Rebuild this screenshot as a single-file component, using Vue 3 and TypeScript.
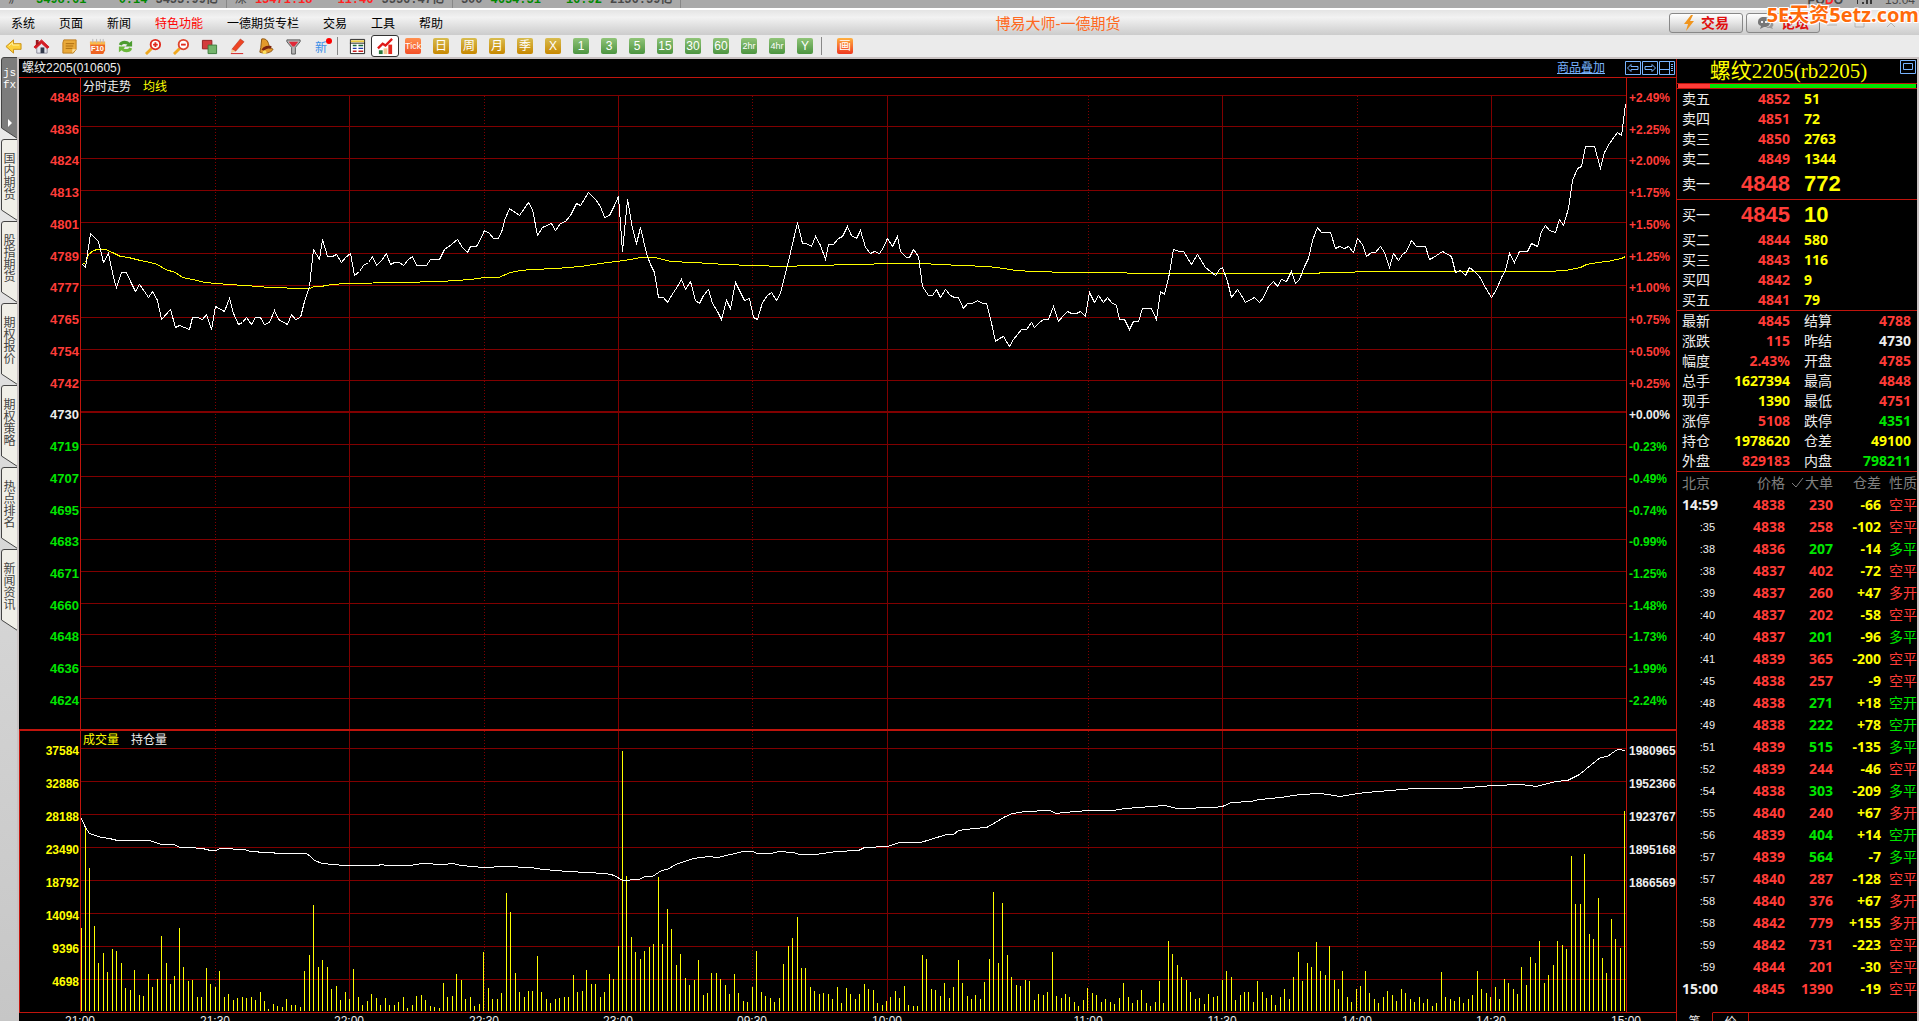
<script setup lang="ts">
import { computed } from 'vue'

type Tone = 'red' | 'green' | 'yellow' | 'white'

const menus = [
  { text: '系统' },
  { text: '页面' },
  { text: '新闻' },
  { text: '特色功能', hot: true },
  { text: '一德期货专栏' },
  { text: '交易' },
  { text: '工具' },
  { text: '帮助' },
]

const periods = [
  { text: 'Tick', kind: 'tick', small: true },
  { text: '日', kind: 'gold' },
  { text: '周', kind: 'gold' },
  { text: '月', kind: 'gold' },
  { text: '季', kind: 'gold' },
  { text: 'X', kind: 'gold' },
  { text: '1', kind: 'leaf' },
  { text: '3', kind: 'leaf' },
  { text: '5', kind: 'leaf' },
  { text: '15', kind: 'leaf' },
  { text: '30', kind: 'leaf' },
  { text: '60', kind: 'leaf' },
  { text: '2hr', kind: 'leaf', small: true },
  { text: '4hr', kind: 'leaf', small: true },
  { text: 'Y', kind: 'leaf' },
]

const sideTabs = ['国内期货', '股指期货', '期权报价', '期权策略', '热点排名', '新闻资讯']

const prices = [4848, 4836, 4824, 4813, 4801, 4789, 4777, 4765, 4754, 4742, 4730, 4719, 4707, 4695, 4683, 4671, 4660, 4648, 4636, 4624]
const percents = ['+2.49%', '+2.25%', '+2.00%', '+1.75%', '+1.50%', '+1.25%', '+1.00%', '+0.75%', '+0.50%', '+0.25%', '+0.00%', '-0.23%', '-0.49%', '-0.74%', '-0.99%', '-1.25%', '-1.48%', '-1.73%', '-1.99%', '-2.24%']
const volumes = [37584, 32886, 28188, 23490, 18792, 14094, 9396, 4698]
const interests = [1980965, 1952366, 1923767, 1895168, 1866569]

const rowTone = (i: number): Tone => (i < 10 ? 'red' : i === 10 ? 'white' : 'green')

const plotLeft = 81
const plotWidth = 1545
const priceRows = prices.map((_, i) => Math.floor(95 + 31.75 * i))
const volumeRows = volumes.map((_, i) => 748 + 33 * i)
const times = [
  { x: 80, text: '21:00', edge: true },
  { x: 215, text: '21:30', dotted: true },
  { x: 349, text: '22:00' },
  { x: 484, text: '22:30', dotted: true },
  { x: 618, text: '23:00' },
  { x: 752, text: '09:30', dotted: true },
  { x: 887, text: '10:00' },
  { x: 1088, text: '11:00', dotted: true },
  { x: 1222, text: '11:30' },
  { x: 1357, text: '14:00', dotted: true },
  { x: 1491, text: '14:30' },
  { x: 1626, text: '15:00', edge: true },
]
const innerTimes = times.filter((t) => !t.edge)
const timeLeft = (x: number) => `${((x - plotLeft) / plotWidth) * 100}%`

const priceLine =
  '82,264 85,267 90,233 94,237 98,241 103,262 108,253 113,277 116,287 121,272 126,272 130,281 135,291 139,284 144,291 148,297 152,291 157,300 161,319 170,309 175,327 179,325 189,329 192,317 197,317 202,319 206,314 211,329 215,306 224,311 229,298 233,313 238,324 242,322 246,317 251,324 255,317 260,317 264,324 269,322 274,310 278,319 287,324 291,314 295,319 300,317 304,301 309,286 311,267 313,249 319,259 322,239 327,256 332,256 336,254 341,262 345,257 350,253 354,275 359,271 363,265 368,262 372,256 376,265 381,260 386,253 390,264 394,262 399,262 403,265 408,259 412,256 416,265 426,265 430,259 439,259 444,249 451,244 457,239 462,247 467,252 470,246 476,246 480,239 484,230 489,233 493,238 498,238 502,229 504,220 509,208 519,215 528,202 532,209 537,235 542,227 551,223 555,230 560,223 565,221 570,215 576,203 580,205 588,192 595,199 600,206 604,217 609,215 614,205 618,196 622,251 627,199 632,228 636,243 640,227 646,253 650,264 654,272 658,297 663,297 667,302 673,292 677,286 681,279 685,289 690,281 695,300 699,303 703,295 708,289 712,303 717,311 721,319 726,300 730,308 735,282 744,300 749,298 753,317 757,319 762,302 767,295 771,292 776,300 780,293 787,265 797,222 802,243 806,243 811,246 815,236 820,245 825,259 828,244 833,244 838,238 842,236 847,226 851,235 856,238 860,230 865,247 870,253 874,251 879,253 883,247 887,238 892,246 897,236 900,251 906,257 909,257 913,249 918,256 922,286 928,295 932,295 936,289 940,297 945,289 950,295 954,297 958,297 963,308 967,303 972,303 977,300 982,303 986,303 990,318 995,341 999,338 1003,336 1009,346 1013,339 1021,329 1026,329 1031,322 1034,327 1039,322 1043,319 1048,319 1053,306 1058,321 1062,316 1067,311 1071,313 1076,313 1080,311 1085,316 1089,292 1094,302 1098,295 1103,302 1107,297 1111,302 1116,305 1119,319 1124,319 1129,329 1133,321 1138,321 1142,308 1151,308 1156,319 1160,291 1164,294 1169,273 1173,249 1179,251 1183,251 1191,264 1197,254 1205,267 1215,275 1219,269 1222,267 1227,281 1231,297 1237,289 1241,295 1245,302 1254,297 1259,302 1263,297 1268,286 1273,281 1277,286 1281,279 1286,281 1291,271 1295,283 1299,279 1304,266 1308,258 1312,240 1317,227 1321,232 1330,232 1335,248 1339,246 1344,248 1348,246 1353,252 1357,238 1362,244 1366,256 1371,252 1375,252 1380,246 1384,252 1389,267 1393,253 1398,260 1402,254 1406,251 1411,240 1416,246 1425,246 1429,259 1433,257 1442,251 1451,256 1455,272 1460,270 1465,275 1469,267 1474,271 1479,276 1486,289 1491,297 1496,289 1501,277 1505,270 1509,253 1514,262 1519,251 1527,251 1531,243 1537,246 1541,231 1545,225 1549,230 1555,232 1559,219 1563,225 1568,208 1572,180 1577,168 1581,166 1585,146 1594,146 1600,168 1604,152 1609,143 1617,132 1621,135 1625,104'
const averageLine =
  '82,264 85,262 88,254 93,250 97,249 105,249 112,252 120,256 128,257 140,260 150,262 157,264 165,269 175,272 182,277 192,279 205,282 228,284 245,285 270,287 303,288 309,288 314,286 320,286 332,284 345,283 400,282 440,281 470,279 484,277 498,277 510,272 520,270 532,269 556,268 580,266 600,263 616,261 630,259 640,257 655,257 670,261 692,262 710,263 725,264 752,265 785,266 808,265 860,264 887,263 920,263 960,265 988,266 1003,268 1015,270 1033,271 1069,272 1126,272 1127,273 1318,273 1320,272 1350,272 1360,271 1546,271 1565,270 1580,267 1586,264 1597,262 1607,261 1621,258 1625,256'
const interestLine =
  '81,818 85,827 89,833 101,837 109,838 117,840 149,840 161,844 173,844 180,847 188,847 202,848 210,850 215,850 220,848 244,849 250,851 282,853 306,853 310,856 314,860 322,863 332,864 345,865 377,865 381,864 386,865 410,865 421,863 444,864 452,863 461,865 483,867 505,866 530,867 543,869 568,871 605,873 610,874 614,875 622,880 638,879 645,876 652,876 661,870 667,869 675,864 693,858 708,856 717,857 743,851 752,851 757,853 771,853 778,851 793,852 799,854 815,854 836,851 858,850 864,847 887,846 899,842 920,842 930,839 946,834 953,834 958,830 974,828 986,827 995,822 1003,817 1012,813 1025,811 1049,810 1056,813 1064,812 1088,810 1112,810 1125,808 1164,805 1177,808 1214,807 1222,806 1231,802 1250,801 1259,799 1280,797 1300,794 1320,793 1340,796 1357,793 1377,791 1414,788 1456,788 1493,785 1520,784 1536,786 1555,781 1567,780 1579,774 1591,764 1600,757 1607,756 1611,753 1617,749 1625,750'

const barHeights = [
  83, 184, 143, 85, 48, 58, 39, 62, 60, 48, 23, 21, 41, 16, 15, 37, 24, 32, 75, 48, 27, 35, 83, 44, 30, 31, 14, 14, 43, 27,
  24, 40, 14, 17, 11, 13, 14, 13, 14, 11, 19, 10, 2, 7, 5, 4, 12, 6, 6, 4, 40, 56, 106, 44, 51, 44, 22, 25, 11, 19,
  12, 42, 14, 6, 10, 17, 13, 6, 13, 6, 6, 9, 14, 3, 6, 15, 16, 11, 5, 4, 3, 28, 14, 15, 37, 31, 12, 14, 5, 7,
  59, 23, 12, 12, 18, 118, 99, 38, 19, 14, 20, 20, 55, 19, 12, 8, 12, 13, 14, 14, 36, 19, 20, 41, 27, 27, 14, 19, 37, 32,
  65, 260, 135, 74, 59, 52, 60, 64, 67, 134, 67, 102, 82, 46, 57, 33, 26, 31, 51, 16, 18, 38, 38, 32, 26, 17, 37, 18, 10, 9,
  24, 60, 19, 15, 13, 9, 13, 47, 65, 73, 94, 43, 43, 24, 20, 17, 18, 17, 12, 24, 8, 23, 17, 12, 17, 27, 22, 21, 8, 6,
  10, 14, 20, 13, 25, 6, 5, 5, 56, 52, 22, 21, 15, 28, 13, 24, 51, 28, 15, 12, 16, 12, 29, 52, 119, 48, 108, 56, 34, 26,
  25, 31, 30, 11, 17, 16, 19, 59, 15, 13, 17, 14, 9, 5, 11, 23, 18, 16, 9, 12, 9, 7, 13, 28, 14, 8, 11, 21, 8, 5,
  9, 30, 8, 70, 57, 46, 34, 31, 19, 12, 13, 7, 17, 14, 15, 31, 40, 34, 11, 16, 19, 19, 9, 30, 19, 13, 16, 6, 14, 22,
  12, 34, 59, 30, 48, 44, 69, 40, 36, 65, 31, 22, 40, 14, 9, 22, 25, 40, 18, 12, 8, 14, 20, 16, 10, 22, 18, 12, 9, 14,
  8, 12, 5, 8, 39, 14, 12, 10, 14, 8, 12, 16, 40, 22, 18, 14, 24, 12, 32, 28, 22, 17, 44, 26, 54, 48, 70, 28, 36, 46,
  70, 66, 62, 155, 107, 107, 157, 77, 72, 113, 53, 38, 92, 72, 63, 200,
]
const bars = computed(() =>
  barHeights.map((height, i) => ({ x: Math.min(plotLeft + Math.floor(4.475 * i), 1625), y: 1011 - height, height })),
)

const asks = [
  { name: '卖五', price: 4852, qty: 51 },
  { name: '卖四', price: 4851, qty: 72 },
  { name: '卖三', price: 4850, qty: 2763 },
  { name: '卖二', price: 4849, qty: 1344 },
  { name: '卖一', price: 4848, qty: 772, big: true },
]
const bids = [
  { name: '买一', price: 4845, qty: 10, big: true },
  { name: '买二', price: 4844, qty: 580 },
  { name: '买三', price: 4843, qty: 116 },
  { name: '买四', price: 4842, qty: 9 },
  { name: '买五', price: 4841, qty: 79 },
]
const stats: [string, string, Tone, string, string, Tone][] = [
  ['最新', '4845', 'red', '结算', '4788', 'red'],
  ['涨跌', '115', 'red', '昨结', '4730', 'white'],
  ['幅度', '2.43%', 'red', '开盘', '4785', 'red'],
  ['总手', '1627394', 'yellow', '最高', '4848', 'red'],
  ['现手', '1390', 'yellow', '最低', '4751', 'red'],
  ['涨停', '5108', 'red', '跌停', '4351', 'green'],
  ['持仓', '1978620', 'yellow', '仓差', '49100', 'yellow'],
  ['外盘', '829183', 'red', '内盘', '798211', 'green'],
]
const trades: [string, number, number, string, string, Tone][] = [
  ['14:59', 4838, 230, '-66', '空平', 'red'],
  [':35', 4838, 258, '-102', '空平', 'red'],
  [':38', 4836, 207, '-14', '多平', 'green'],
  [':38', 4837, 402, '-72', '空平', 'red'],
  [':39', 4837, 260, '+47', '多开', 'red'],
  [':40', 4837, 202, '-58', '空平', 'red'],
  [':40', 4837, 201, '-96', '多平', 'green'],
  [':41', 4839, 365, '-200', '空平', 'red'],
  [':45', 4838, 257, '-9', '空平', 'red'],
  [':48', 4838, 271, '+18', '空开', 'green'],
  [':49', 4838, 222, '+78', '空开', 'green'],
  [':51', 4839, 515, '-135', '多平', 'green'],
  [':52', 4839, 244, '-46', '空平', 'red'],
  [':54', 4838, 303, '-209', '多平', 'green'],
  [':55', 4840, 240, '+67', '多开', 'red'],
  [':56', 4839, 404, '+14', '空开', 'green'],
  [':57', 4839, 564, '-7', '多平', 'green'],
  [':57', 4840, 287, '-128', '空平', 'red'],
  [':58', 4840, 376, '+67', '多开', 'red'],
  [':58', 4842, 779, '+155', '多开', 'red'],
  [':59', 4842, 731, '-223', '空平', 'red'],
  [':59', 4844, 201, '-30', '空平', 'red'],
  ['15:00', 4845, 1390, '-19', '空平', 'red'],
]
</script>

<template>
  <div class="app">
    <div class="ticker">
      <div class="ticker-group first"><span>沪</span><b class="up">3498.61</b><b class="up chg">0.14</b><b>3453.99亿</b></div>
      <div class="ticker-group"><span>深</span><b class="down">13471.18</b><b class="down chg">-11.46</b><b>5556.47亿</b></div>
      <div class="ticker-group"><b>300</b><b class="up">4634.31</b><b class="up chg">16.92</b><b>2156.59亿</b></div>
      <div class="ticker-end">
        <b>PO<i>D</i>O</b>
        <svg width="18" height="16" viewBox="0 0 18 16" fill="#383838"><path d="M2 8h1v4H2zM7 10h2v2H7zM11 8h2v4h-2zM15 6h2v6h-2z" /></svg>
        <span>15:04</span>
      </div>
    </div>

    <header class="menubar">
      <nav class="menus">
        <a v-for="m in menus" :key="m.text" href="#" :class="{ hot: m.hot }">{{ m.text }}</a>
      </nav>
      <h1>博易大师-一德期货</h1>
      <div class="actions">
        <button type="button" class="pill">
          <svg width="12" height="16" viewBox="0 0 12 16"><path d="M8 0 1 9h4L3 16l8-10H7l3-6z" fill="#f0951e" /></svg>交易
        </button>
        <button type="button" class="pill">
          <svg width="18" height="14" viewBox="0 0 18 14"><path d="M7 1c4 0 6 2 6 5s-2 5-6 5l-4 2 1-3C1 9 1 7 1 6c0-3 2-5 6-5z" fill="#777" /><path d="M14 6c3 1 3 4 1 5l1 2-3-1c-2 0-3 0-4-1 4 0 5-2 5-5z" fill="#999" /><path d="M4 5h2v2H4zM8 5h2v2H8z" fill="#eee" /></svg>论坛
        </button>
        <svg class="win" width="84" height="14" viewBox="0 0 84 14" fill="none" stroke="#b4b4b4"><path d="M4 9h10M32 3h9v8h-9zM64 3l8 8M72 3l-8 8" /></svg>
        <span class="brand">5E天资5etz.com</span>
      </div>
    </header>

    <div class="toolbar">
      <button type="button" class="first" aria-label="返回"><svg viewBox="0 0 18 18"><path d="M1 9 9 2v4h8v6H9v4z" fill="#fcd03c" stroke="#c98f12" /><path d="M4 8.500 8 5v2.500h7" fill="none" stroke="#fff0a0" /></svg></button>
      <button type="button" aria-label="首页"><svg viewBox="0 0 18 18"><path d="M4 9v7h11V9L9 4z" fill="#e4e6ee" stroke="#8c8c9c" /><path d="M1 9.500 9 2l8 7.500-2 1.500-6-5.500L3 11z" fill="#d41c24" stroke="#d41c24" /><path d="M3 2h3v4L3 8z" fill="#9c1820" /><path d="M8 10h4v6H8z" fill="#333a4c" /></svg></button>
      <button type="button" aria-label="公告"><svg viewBox="0 0 18 18"><path d="M3 2h13v10l-3 4H2V5z" fill="#e9a93a" stroke="#bb7a1a" /><path d="M5 6h9M5 8.500h8M5 11h7" stroke="#a8690f" /><path d="m12 12 4 0-4 4z" fill="#fbe2a0" /></svg></button>
      <button type="button" aria-label="F10"><svg viewBox="0 0 18 18"><path d="M1 4h16v9l-2 4H2z" fill="#ee6424" /><path d="M1 4h16v3H1z" fill="#f8b94c" /><path d="M4 1v4M8 1v4M12 1v4M15 1v4" stroke="#b8b8b8" /><text x="9" y="14" text-anchor="middle" class="f10">F10</text></svg></button>
      <button type="button" aria-label="刷新"><svg viewBox="0 0 18 18"><path d="M2 7c1-5 9-5 11-2l3-2v6h-7l2-2C9 6 6 6 5 8z" fill="#4c9c30" /><path d="M16 11c-1 5-9 5-11 2l-3 2V9h7l-2 2c2 1 5 1 6-1z" fill="#6cb83c" /></svg></button>
      <button type="button" aria-label="放大"><svg viewBox="0 0 18 18"><path d="m1 17 6-6" stroke="#f0a820" stroke-width="3" /><circle cx="11" cy="7" r="5" fill="#fff" stroke="#e02c20" stroke-width="2" /><path d="M8.500 7h5M11 4.500v5" stroke="#e02c20" stroke-width="2" /></svg></button>
      <button type="button" aria-label="缩小"><svg viewBox="0 0 18 18"><path d="m1 17 6-6" stroke="#f0a820" stroke-width="3" /><circle cx="11" cy="7" r="5" fill="#fff" stroke="#e0442c" stroke-width="2" /><path d="M8.500 7h5" stroke="#e02c20" stroke-width="2" /></svg></button>
      <button type="button" aria-label="叠加"><svg viewBox="0 0 18 18"><path d="M1.500 2.500h10v9h-10z" fill="#d43c3c" stroke="#942020" /><path d="M7.500 7.500h9v9h-9z" fill="#74b46c" stroke="#3c7c3c" /></svg></button>
      <button type="button" aria-label="画线"><svg viewBox="0 0 18 18"><path d="m3 12 9-11 4 3-9 10z" fill="#ee4424" stroke="#a82818" stroke-width=".5" /><path d="m3 12 4 2-5 2z" fill="#f4cc94" /><path d="M2 16.500h13" stroke="#d42020" /></svg></button>
      <button type="button" aria-label="预警"><svg viewBox="0 0 18 18"><path d="M5 1c6-1 7 4 8 8l4 3c-2 4-9 5-14 3l1-5z" fill="#e49a2c" stroke="#8c5410" /><path d="M6 13c2-3 6-4 9-3" stroke="#7c2410" stroke-width="3" fill="none" /><circle cx="8" cy="15" r="2" fill="#fbe060" /></svg></button>
      <button type="button" aria-label="筛选"><svg viewBox="0 0 18 18"><path d="M2 2h14v2l-5 6v7H7v-7L2 4z" fill="#b4b4b4" stroke="#585858" /><path d="M4 4h10l-4 5H8z" fill="#e02838" /></svg></button>
      <button type="button" class="new" aria-label="新功能">新</button>
      <span class="sep"></span>
      <button type="button" aria-label="报价表"><svg viewBox="0 0 18 18"><path d="M1.500 1.500h15v15h-15z" fill="#fff" stroke="#222" /><path d="M2 3.500h14" stroke="#e8c840" stroke-width="2" /><path d="M1 5.500h16" stroke="#222" /><path d="M4 8h4M10 8h5" stroke="#186838" stroke-width="1.500" /><path d="M4 11h4M10 11h5" stroke="#2038a8" stroke-width="1.500" /><path d="M4 14h4M10 14h5" stroke="#c82020" stroke-width="1.500" /></svg></button>
      <button type="button" class="active" aria-label="分时图"><svg viewBox="0 0 18 18"><path d="m1 11 5-5 3 2 7-7" stroke="#e01818" stroke-width="2.500" fill="none" /><path d="M2 13h4v4H2z" fill="#28783c" /><path d="M7 11h4v6H7z" fill="#f0c890" /><path d="M12 7h4v10h-4z" fill="#e4281c" /></svg></button>
      <button v-for="p in periods" :key="p.text" type="button"><span class="tile" :class="[p.kind, { small: p.small }]">{{ p.text }}</span></button>
      <span class="sep wide"></span>
      <button type="button"><span class="tile paint">画</span></button>
    </div>

    <main class="workspace">
      <aside class="side">
        <button type="button" class="side-tab dark">
          <svg viewBox="0 0 17 82"><path d="M17.500.5H4Q1.500.5 1.500 3V71L17.500 81.500z" /><path class="mark" d="m8 62 4 4-4 4z" /></svg>
          <span>js<br />fx</span>
        </button>
        <button v-for="t in sideTabs" :key="t" type="button" class="side-tab">
          <svg viewBox="0 0 17 82"><path d="M17.500.5H4Q1.500.5 1.500 3V71L17.500 81.500z" /></svg>
          <span>{{ t }}</span>
        </button>
      </aside>

      <section class="chart">
        <header class="chart-head">
          <h2>螺纹2205(010605)</h2>
          <a href="#">商品叠加</a>
          <div class="head-tools">
            <button type="button" aria-label="上一个"><svg viewBox="0 0 16 14"><path d="M.5.5h15v13H.5zM2.500 7 6 3.500v2h7v3H6v2z" /></svg></button>
            <button type="button" aria-label="下一个"><svg viewBox="0 0 16 14"><path d="M.5.5h15v13H.5zM13.500 7 10 3.500v2H3v3h7v2z" /></svg></button>
            <button type="button" aria-label="侧栏"><svg viewBox="0 0 16 14"><path d="M.5.5h15v13H.5zM10.500 1v12M1 8.500h9M12 3.500h2M12 5.500h2M12 7.500h2M12 9.500h2" /></svg></button>
          </div>
        </header>

        <div class="pane price-pane">
          <ol class="axis left"><li v-for="(p, i) in prices" :key="p" :class="rowTone(i)">{{ p }}</li></ol>
          <div class="plot">
            <svg viewBox="81 78 1545 651" preserveAspectRatio="none">
              <rect v-for="(y, i) in priceRows" :key="y" class="grid" x="81" :y="i === 10 ? y - 1 : y" width="1545" :height="i === 10 ? 2 : 1" />
              <line v-for="t in innerTimes" :key="t.x" class="tick" :class="{ dotted: t.dotted }" :x1="t.x + 0.5" :x2="t.x + 0.5" y1="96" y2="729" />
              <g transform="translate(0.5 0.5)">
                <polyline class="avg" :points="averageLine" />
                <polyline class="last" :points="priceLine" />
              </g>
            </svg>
            <p class="legend"><span>分时走势</span><span class="yellow">均线</span></p>
          </div>
          <ol class="axis right"><li v-for="(p, i) in percents" :key="p" :class="rowTone(i)">{{ p }}</li></ol>
        </div>

        <div class="pane volume-pane">
          <ol class="axis left"><li v-for="v in volumes" :key="v" class="yellow">{{ v }}</li></ol>
          <div class="plot">
            <svg viewBox="81 731 1545 281" preserveAspectRatio="none">
              <rect v-for="y in volumeRows" :key="y" class="grid" x="81" :y="y" width="1545" height="1" />
              <line v-for="t in innerTimes" :key="t.x" class="tick" :class="{ dotted: t.dotted }" :x1="t.x + 0.5" :x2="t.x + 0.5" y1="731" y2="1012" />
              <rect v-for="(b, i) in bars" :key="i" class="bar" :x="b.x" :y="b.y" width="1" :height="b.height" />
              <g transform="translate(0.5 0.5)"><polyline class="last" :points="interestLine" /></g>
            </svg>
            <p class="legend"><span class="yellow">成交量</span><span>持仓量</span></p>
          </div>
          <ol class="axis right"><li v-for="v in interests" :key="v">{{ v }}</li></ol>
        </div>

        <div class="time-axis">
          <span v-for="t in times" :key="t.x" :style="{ left: timeLeft(t.x) }">{{ t.text }}</span>
        </div>
      </section>

      <section class="quote">
        <header class="quote-head">
          <h2>螺纹2205(rb2205)</h2>
          <button type="button" aria-label="最大化"><svg viewBox="0 0 16 14"><path d="M.5.5h15v13H.5zM3.500 3.500h9v6h-9z" /></svg></button>
        </header>
        <div class="ratio"><span></span></div>

        <table class="book asks">
          <colgroup><col class="c-name" /><col class="c-value" /><col /></colgroup>
          <tbody>
            <tr v-for="r in asks" :key="r.name" :class="{ big: r.big }"><th scope="row">{{ r.name }}</th><td class="num red">{{ r.price }}</td><td class="qty">{{ r.qty }}</td></tr>
          </tbody>
        </table>
        <table class="book bids">
          <colgroup><col class="c-name" /><col class="c-value" /><col /></colgroup>
          <tbody>
            <tr v-for="r in bids" :key="r.name" :class="{ big: r.big }"><th scope="row">{{ r.name }}</th><td class="num red">{{ r.price }}</td><td class="qty">{{ r.qty }}</td></tr>
          </tbody>
        </table>
        <table class="stats">
          <colgroup><col class="c-name" /><col class="c-value" /><col class="c-name2" /><col /></colgroup>
          <tbody>
            <tr v-for="s in stats" :key="s[0]"><th scope="row">{{ s[0] }}</th><td class="num" :class="s[2]">{{ s[1] }}</td><th scope="row" class="second">{{ s[3] }}</th><td class="num end" :class="s[5]">{{ s[4] }}</td></tr>
          </tbody>
        </table>
        <table class="trades">
          <colgroup><col class="t-time" /><col class="t-price" /><col class="t-qty" /><col class="t-qty" /><col /></colgroup>
          <thead>
            <tr>
              <th scope="col" class="start">北京</th>
              <th scope="col">价格</th>
              <th scope="col"><span class="sorted"><svg width="13" height="14" viewBox="0 0 13 14"><path d="m1 7 4 4 7-9" /></svg>大单</span></th>
              <th scope="col">仓差</th>
              <th scope="col">性质</th>
            </tr>
          </thead>
          <tbody>
            <tr v-for="(t, i) in trades" :key="i">
              <td :class="t[0].length > 3 ? 'full' : 'sec'">{{ t[0] }}</td>
              <td class="num red">{{ t[1] }}</td>
              <td class="num" :class="t[5]">{{ t[2] }}</td>
              <td class="num yellow">{{ t[3] }}</td>
              <td class="kind" :class="t[5]">{{ t[4] }}</td>
            </tr>
          </tbody>
        </table>
        <div class="quote-tabs"><button type="button" class="on">笔</button><button type="button">价</button></div>
      </section>
    </main>
  </div>
</template>

<style>
html,
body {
  overflow: hidden;
  background: #000;
}
</style>

<style scoped>
.app {
  display: flex;
  flex-direction: column;
  height: 100vh;
  overflow: hidden;
  font-family: 'Liberation Sans', 'Noto Sans CJK SC', sans-serif;
  font-size: 12px;
  color: #eee;
}
* {
  box-sizing: border-box;
}
h1,
h2,
p,
ol {
  margin: 0;
  padding: 0;
  font-weight: 400;
  list-style: none;
}
button {
  padding: 0;
  border: 0;
  background: none;
  color: inherit;
  font: inherit;
}
a {
  color: inherit;
  text-decoration: none;
}
svg {
  display: block;
}
table {
  width: 100%;
  border-collapse: collapse;
  table-layout: fixed;
}
th,
td {
  padding: 0;
  font-weight: 400;
  text-align: left;
  white-space: nowrap;
}
.red {
  color: #ff3c38;
}
.green {
  color: #00e600;
}
.yellow {
  color: #ff0;
}
.white {
  color: #eee;
}

.ticker {
  display: flex;
  flex: none;
  height: 8px;
  overflow: hidden;
  background: #a9a9a9;
  color: #484848;
  font-family: 'Liberation Mono', 'Noto Sans CJK SC', monospace;
  line-height: 16px;
  white-space: nowrap;
}
.ticker-group {
  display: flex;
  gap: 8px;
  height: 16px;
  margin-top: -8px;
  padding: 0 8px;
  border-right: 1px solid #888;
}
.ticker-group.first > span {
  margin-right: 8px;
}
.ticker .up {
  color: #080;
}
.ticker .down,
.ticker i {
  color: #f22;
  font-style: normal;
}
.ticker .chg {
  min-width: 53px;
  text-align: right;
}
.ticker-end {
  display: flex;
  gap: 12px;
  margin: -8px 4px 0 auto;
  font-family: 'Liberation Sans', sans-serif;
}

.menubar {
  display: flex;
  flex: none;
  align-items: center;
  justify-content: space-between;
  height: 27px;
  padding-left: 11px;
  border-top: 2px solid #fff;
  background: linear-gradient(#e4e4e4, #f2f2f2 30%, #ccc);
  color: #000;
}
.menus {
  display: flex;
  gap: 24px;
  padding-right: 4px;
}
.menus .hot {
  color: #f00;
}
.menubar h1 {
  color: #ff6820;
  font-size: 15px;
}
.actions {
  position: relative;
  display: flex;
  align-items: center;
  gap: 3px;
  width: 250px;
}
.pill {
  display: flex;
  align-items: center;
  justify-content: center;
  gap: 6px;
  width: 74px;
  height: 20px;
  border: 1px solid #888;
  border-radius: 3px;
  background: linear-gradient(#fff, #e4e4e4 50%, #c4c4c4);
  color: #e01010;
  font-size: 14px;
  font-weight: 700;
  line-height: 18px;
}
.brand {
  position: absolute;
  right: 0;
  top: -12px;
  color: #ff6a0a;
  font: 700 20px/28px 'Open Sans', 'Noto Sans CJK SC', sans-serif;
  text-shadow: 1px 1px #fff, -1px -1px #fff, 1px -1px #fff, -1px 1px #fff;
  white-space: nowrap;
}

.toolbar {
  display: flex;
  flex: none;
  align-items: center;
  height: 24px;
  border-bottom: 2px solid #c9c2c2;
  background: #ebebeb;
}
.toolbar button {
  display: flex;
  align-items: center;
  justify-content: center;
  width: 28px;
  height: 22px;
}
.toolbar .first {
  width: 27px;
}
.toolbar svg {
  width: 17px;
  height: 17px;
}
.toolbar .active {
  border: 1px solid #333;
  border-radius: 3px;
  background: #fff;
}
.toolbar .new {
  position: relative;
  color: #3a8ee6;
}
.toolbar .new::after {
  position: absolute;
  top: 3px;
  right: 3px;
  width: 6px;
  height: 6px;
  border-radius: 50%;
  background: #f00;
  content: '';
}
.f10 {
  fill: #fff;
  font: 700 8px 'Liberation Sans', sans-serif;
}
.sep {
  width: 6px;
  height: 18px;
  margin-left: 2px;
  border-left: 1px solid #888;
}
.sep.wide {
  width: 10px;
}
.tile {
  width: 16px;
  height: 16px;
  border-radius: 2px;
  color: #fff;
  font-size: 12px;
  line-height: 16px;
  text-align: center;
}
.tile.small {
  font-size: 9px;
}
.tile.tick {
  background: linear-gradient(#ff9050, #f45028);
}
.tile.gold {
  background: linear-gradient(#d8bc50, #c88800);
}
.tile.leaf {
  background: linear-gradient(#90c478, #4c9440);
}
.tile.paint {
  background: linear-gradient(#ffb040, #f03820);
}

.workspace {
  display: flex;
  flex: 1;
  min-height: 0;
  border-right: 2px solid #c9c2c2;
  background: #000;
}
.side {
  flex: none;
  width: 19px;
  margin-top: -2px;
  border-right: 2px solid #c9c2c2;
  background: linear-gradient(#ebebeb, #d4d4d4 60%, #c6c6c6);
}
.side-tab {
  position: relative;
  display: block;
  width: 17px;
  height: 82px;
  color: #444;
  line-height: 12px;
  text-align: center;
}
.side-tab svg {
  width: 17px;
  height: 82px;
  fill: #f0efe8;
  stroke: #444;
}
.side-tab span {
  position: absolute;
  inset: 14px 1px auto 3px;
}
.side-tab.dark {
  color: #fff;
  font-size: 11px;
  font-family: 'Liberation Mono', monospace;
}
.side-tab.dark span {
  inset: 10px 0 auto 2px;
}
.side-tab.dark svg {
  fill: #7c7c7c;
}
.side-tab .mark {
  fill: #fff;
  stroke: none;
}

.chart {
  flex: 1;
  min-width: 0;
}
.chart-head {
  display: flex;
  align-items: center;
  height: 19px;
  padding-left: 3px;
  border-bottom: 1px solid #c0140c;
}
.chart-head h2 {
  flex: 1;
  font-size: 12px;
  line-height: 16px;
}
.chart-head a {
  margin-right: 20px;
  color: #78b4ff;
  line-height: 16px;
  text-decoration: underline;
}
.head-tools {
  display: flex;
  gap: 1px;
  padding-right: 1px;
}
.head-tools svg,
.quote-head svg {
  width: 16px;
  height: 14px;
  fill: none;
  stroke: #78b4ff;
}
.pane {
  display: flex;
}
.price-pane {
  height: 653px;
  border-bottom: 2px solid #c0140c;
}
.volume-pane {
  height: 282px;
  border-bottom: 1px solid #c0140c;
}
.axis {
  display: flex;
  flex: none;
  flex-direction: column;
  font-weight: 700;
}
.axis.left {
  width: 62px;
  padding-right: 1px;
  border-right: 1px solid #c0140c;
  text-align: right;
}
.axis.right {
  width: 50px;
  padding-left: 2px;
  border-left: 1px solid #c0140c;
}
.price-pane .axis {
  justify-content: space-between;
  padding-top: 12px;
  padding-bottom: 20px;
  line-height: 16px;
}
.price-pane .axis.left {
  font-size: 13px;
}
.volume-pane .axis {
  padding-top: 4px;
  line-height: 33px;
}
.volume-pane .axis.left {
  border-left: 1px solid #c0140c;
}
.plot {
  position: relative;
  flex: 1;
  min-width: 0;
}
.plot svg {
  width: 100%;
  height: 100%;
}
.grid {
  fill: #800000;
  shape-rendering: crispEdges;
}
.tick {
  stroke: #800000;
  shape-rendering: crispEdges;
}
.dotted {
  stroke-dasharray: 1 2;
}
.bar {
  fill: #ff0;
  shape-rendering: crispEdges;
}
.avg,
.last {
  fill: none;
  stroke: #fff;
  shape-rendering: crispEdges;
}
.avg {
  stroke: #ff0;
}
.legend {
  position: absolute;
  top: 0;
  left: 2px;
  display: flex;
  gap: 12px;
  line-height: 19px;
}
.time-axis {
  position: relative;
  height: 18px;
  margin: 0 50px 0 62px;
  line-height: 16px;
}
.time-axis span {
  position: absolute;
  transform: translateX(-50%);
}

.quote {
  flex: none;
  width: 241px;
  border-left: 1px solid #c0140c;
  font-size: 14px;
}
.quote-head {
  display: flex;
  align-items: center;
  height: 24px;
  padding-right: 1px;
}
.quote-head h2 {
  flex: 1;
  color: #ff0;
  font: 21px/24px 'Liberation Serif', 'Noto Sans CJK SC', serif;
  text-align: center;
}
.quote-head button {
  align-self: flex-start;
  padding-top: 1px;
}
.ratio {
  height: 6px;
  padding: 0 1px;
  border-top: 1px solid #c0140c;
  border-bottom: 1px solid #c0140c;
  background: #00e600 content-box;
}
.ratio span {
  display: block;
  width: 32px;
  height: 4px;
  background: #ff3c38;
}
.c-name {
  width: 45px;
}
.c-value {
  width: 68px;
}
.c-name2 {
  width: 60px;
}
tr {
  height: 20px;
  line-height: 20px;
}
tbody th,
.start,
.full {
  padding-left: 5px;
}
tbody .second {
  padding-left: 14px;
}
.num,
.qty,
.full {
  font-family: 'Noto Sans', sans-serif;
  font-weight: 700;
}
.num {
  text-align: right;
}
.end {
  padding-right: 6px;
}
.qty {
  padding-left: 14px;
  color: #ff0;
}
.big {
  height: 30px;
}
.big .num,
.big .qty {
  font-family: 'Liberation Sans', sans-serif;
  font-size: 22px;
}
.asks,
.bids,
.stats {
  border-bottom: 1px solid #c0140c;
}
.t-time {
  width: 46px;
}
.t-price {
  width: 62px;
}
.t-qty {
  width: 48px;
}
.trades tr {
  height: 22px;
  line-height: 22px;
}
.trades thead th {
  color: #808080;
  text-align: right;
}
.trades thead .start {
  text-align: left;
}
.sorted {
  display: flex;
  align-items: center;
  justify-content: flex-end;
  gap: 1px;
}
.sorted svg {
  fill: none;
  stroke: #808080;
}
.trades .sec {
  padding-right: 8px;
  font-size: 11px;
  text-align: right;
}
.trades .kind {
  text-align: right;
}
.quote-tabs {
  display: flex;
  margin-top: 12px;
}
.quote-tabs::after {
  flex: 1;
  border-top: 1px solid #c0140c;
  content: '';
}
.quote-tabs button {
  width: 36px;
  height: 20px;
  border-top: 1px solid #c0140c;
  border-right: 1px solid #c0140c;
  font-size: 12px;
  line-height: 18px;
}
.quote-tabs .on {
  border-top-color: #000;
}
</style>
